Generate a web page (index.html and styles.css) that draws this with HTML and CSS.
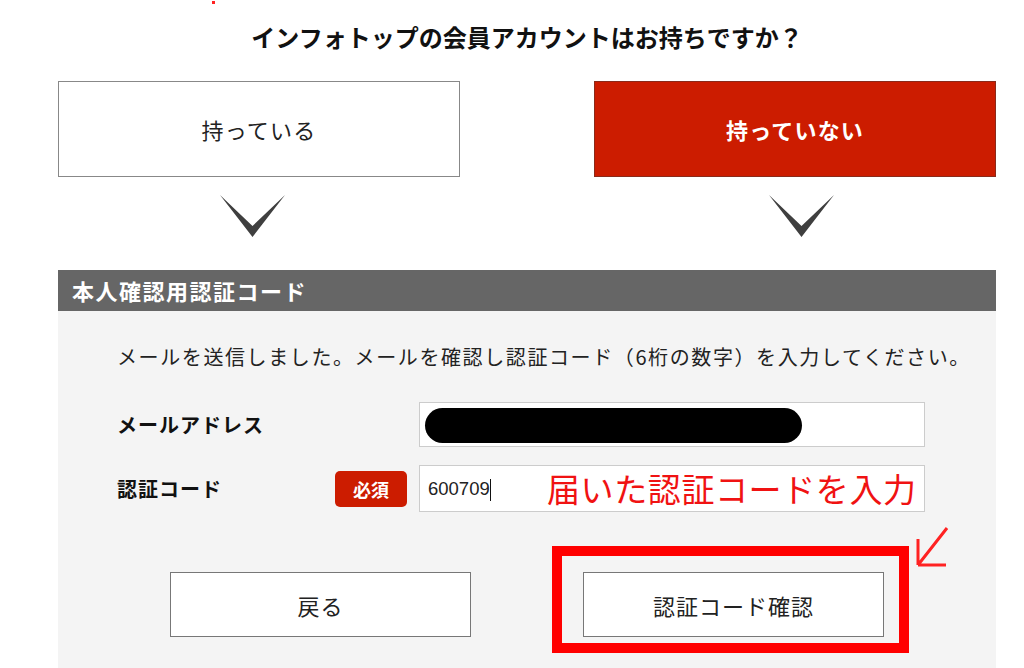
FILE: index.html
```html
<!DOCTYPE html>
<html lang="ja">
<head>
  <meta charset="UTF-8" />
  <meta name="viewport" content="width=device-width, initial-scale=1" />
  <title>本人確認用認証コード</title>
  <link rel="stylesheet" href="styles.css">
</head>
<body>

<span class="dot"></span>

<div class="page">
  <h2 class="question">インフォトップの会員アカウントはお持ちですか？</h2>

  <div class="choice">
    <div class="choice-col">
      <button class="choice-btn">持っている</button>
      <svg class="chevron left" width="65" height="42" viewBox="0 0 65 42"><polygon points="0,0 32.5,42 65,0 32.5,31" /></svg>
    </div>
    <div class="choice-col">
      <button class="choice-btn active">持っていない</button>
      <svg class="chevron right" width="65" height="42" viewBox="0 0 65 42"><polygon points="0,0 32.5,42 65,0 32.5,31" /></svg>
    </div>
  </div>

  <!-- 認証コード -->
  <section class="panel">
    <h3 class="panel-title">本人確認用認証コード</h3>
    <div class="panel-body">
      <p class="lead">メールを送信しました。メールを確認し認証コード（6桁の数字）を入力してください。</p>

      <div class="form-row">
        <label class="label">メールアドレス</label>
        <span></span>
        <div class="field"><span class="mask"></span></div>
      </div>

      <div class="form-row">
        <label class="label">認証コード</label>
        <span class="badge">必須</span>
        <div class="field code">
          600709<span class="caret"></span>
          <span class="note">届いた認証コードを入力</span>
        </div>
      </div>

      <div class="actions">
        <button class="btn">戻る</button>
        <div class="btn-wrap">
          <button class="btn">認証コード確認</button>
          <span class="mark"></span>
          <svg class="arrow" width="36" height="44" viewBox="0 0 36 44">
            <path d="M33 2 L4 39 M4 39 L32 39 M4 39 L4 13" />
          </svg>
        </div>
      </div>
    </div>
  </section>
</div>

</body>
</html>
```

FILE: styles.css
```css
body {
  margin: 0;
  background: #fff;
  color: #222;
  font-family: "Noto Sans CJK JP", "Noto Sans", sans-serif;
}
.dot {
  position: absolute;
  left: 212px;
  top: 1px;
  width: 3px;
  height: 3px;
  background: #f22;
}
.page {
  width: 938px;
  margin-left: 58px;
}
.question {
  margin: 19px 0 26px;
  font-size: 24px;
  line-height: 36px;
  text-align: center;
  color: #111;
}
.choice {
  display: grid;
  grid-template-columns: 402px 402px;
  column-gap: 134px;
}
.choice-col {
  display: flex;
  flex-direction: column;
  align-items: center;
}
.choice-btn {
  width: 402px;
  height: 96px;
  background: #fff;
  border: 1px solid #888;
  font-family: inherit;
  font-size: 22px;
  letter-spacing: 1.2px;
  color: #222;
  cursor: pointer;
}
.choice-btn.active {
  background: #cc1c00;
  border-color: #8a2a1a;
  color: #fff;
  font-weight: bold;
}
.chevron {
  margin-top: 18px;
  fill: #3f3f3f;
}
.chevron.left {
  margin-right: 14px;
}
.chevron.right {
  margin-left: 12px;
}
.panel {
  margin-top: 33px;
}
.panel-title {
  margin: 0;
  height: 41px;
  line-height: 41px;
  padding-left: 14px;
  background: #666;
  color: #fff;
  font-size: 22px;
  letter-spacing: 1.5px;
}
.panel-body {
  background: #f4f4f4;
  padding: 31px 71px 40px 59px;
}
.lead {
  margin: 0 0 30px;
  font-size: 20px;
  line-height: 30px;
  letter-spacing: 1.6px;
  color: #222;
  white-space: nowrap;
}
.form-row {
  display: grid;
  grid-template-columns: 206px 72px 506px;
  column-gap: 12px;
  align-items: center;
  margin-bottom: 18px;
}
.label {
  font-size: 20px;
  font-weight: bold;
  letter-spacing: 1px;
  color: #111;
}
.badge {
  height: 36px;
  line-height: 36px;
  border-radius: 5px;
  background: #cc1c00;
  color: #fff;
  font-size: 18px;
  font-weight: bold;
  text-align: center;
}
.field {
  position: relative;
  height: 45px;
  box-sizing: border-box;
  background: #fff;
  border: 1px solid #ccc;
  padding: 5px;
}
.mask {
  display: block;
  width: 377px;
  height: 35px;
  border-radius: 18px;
  background: #000;
}
.field.code {
  height: 47px;
  display: flex;
  align-items: center;
  padding: 0 8px;
  font-family: "Liberation Sans", Arial, sans-serif;
  font-size: 18.5px;
  color: #222;
}
.caret {
  display: inline-block;
  width: 1px;
  height: 22px;
  background: #111;
  margin-top: 2px;
}
.note {
  position: absolute;
  left: 127px;
  top: 0;
  line-height: 45px;
  font-family: "Noto Sans CJK JP", sans-serif;
  font-size: 33px;
  letter-spacing: 0.6px;
  color: #f01212;
  white-space: nowrap;
}
.actions {
  display: flex;
  justify-content: center;
  gap: 112px;
  margin-top: 60px;
  padding-left: 12px;
}
.btn {
  width: 301px;
  height: 65px;
  background: #fff;
  border: 1px solid #777;
  font-family: inherit;
  font-size: 22px;
  letter-spacing: 1px;
  color: #222;
  cursor: pointer;
}
.btn-wrap {
  position: relative;
}
.mark {
  position: absolute;
  left: -31px;
  top: -26px;
  width: 357px;
  height: 107px;
  box-sizing: border-box;
  border: 10px solid #f00;
}
.arrow {
  position: absolute;
  left: 331px;
  top: -46px;
  fill: none;
  stroke: #f22;
  stroke-width: 3;
}
```
